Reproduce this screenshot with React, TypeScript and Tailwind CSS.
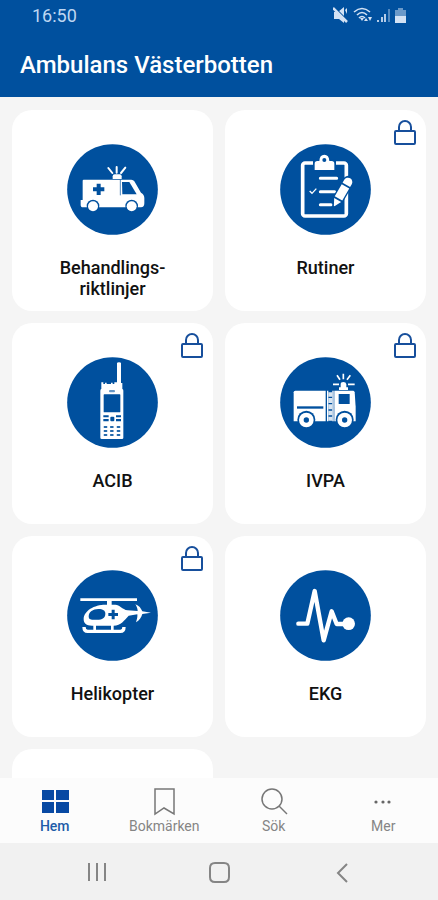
import type { ReactNode } from "react";

const BLUE = "#00509e";

function Disc({ children }: { children: ReactNode }) {
  return (
    <svg viewBox="0 0 273 273" className="size-[91px]" aria-hidden="true">
      <circle cx="136.5" cy="136.5" r="136" fill={BLUE} />
      {children}
    </svg>
  );
}

function AmbulanceIcon() {
  return (
    <Disc>
      <g fill="#fff">
        <path d="M50 107H193Q199 107 202 112L222 146Q232 151 232 162V178Q232 190 222 190H48Q41 190 41 182V168H47V110Q47 107 50 107Z" />
        <path d="M137 105V97Q137 91 143 91H158Q164 91 164 97V105Z" />
        <path d="M149 86V69M136 87L124 72M162 87L175 71" stroke="#fff" strokeWidth="6" strokeLinecap="round" />
      </g>
      <g fill={BLUE}>
        <path d="M89 119H101V130H112V142H101V153H89V142H78V130H89Z" />
        <path d="M165 114H187L209 151H166Z" />
        <circle cx="78" cy="186" r="19" />
        <circle cx="194" cy="186" r="19" />
      </g>
      <path d="M160 107V154" stroke={BLUE} strokeWidth="2" />
      <circle cx="78" cy="187" r="15" fill="#fff" />
      <circle cx="194" cy="187" r="15" fill="#fff" />
    </Disc>
  );
}

function ClipboardIcon() {
  return (
    <Disc>
      <rect x="68" y="57" width="131" height="159" rx="7" fill="none" stroke="#fff" strokeWidth="11" />
      <path d="M99 47H168V82H99Z" fill={BLUE} />
      <path d="M104 78V59Q104 51 112 51H118Q119 32 133 32T148 51H155Q163 51 163 59V78Z" fill="#fff" />
      <circle cx="133" cy="48" r="6" fill={BLUE} />
      <path d="M121 103H170M121 143H164M121 182H153" stroke="#fff" strokeWidth="9" strokeLinecap="round" />
      <path d="M89 141L96 148L109 134" fill="none" stroke="#fff" strokeWidth="4" />
      <g transform="translate(204 114) rotate(30)">
        <path d="M-17 -2A17 17 0 0 1 17 -2V58L2 88H-3L-17 58Z" fill={BLUE} />
        <path d="M-13 10V0A13 13 0 0 1 13 0V10ZM-13 15H13V57H-13ZM-12 62H12L1 83H-1Z" fill="#fff" />
      </g>
    </Disc>
  );
}

function RadioIcon() {
  const columns = [110, 129, 149];
  const rows = [207, 219, 231];
  return (
    <Disc>
      <path d="M150 19Q150 16 156 16T162 19V78H166V96Q169 97 169 101V242Q169 246 165 246H104Q100 246 100 242V101Q100 97 103 96V76H109V81H114V77H119V81H132V77H137V81H142V76H150Z" fill="#fff" />
      <g fill={BLUE}>
        <rect x="126" y="99" width="18" height="7" rx="3" opacity="0.6" />
        <rect x="110" y="112" width="50" height="54" rx="2" />
        <path d="M109 175H125V181H109ZM109 186H125V193H109ZM147 175H162V181H147ZM147 186H162V193H147Z" />
        <rect x="130" y="179" width="12" height="14" rx="3" />
        {rows.map((y) => columns.map((x) => <rect key={x + "-" + y} x={x} y={y} width="11" height="6" rx="2" opacity="0.85" />))}
      </g>
    </Disc>
  );
}

function FireTruckIcon() {
  return (
    <Disc>
      <g fill="#fff">
        <path d="M46 101H137V193H41V106Q41 101 46 101Z" />
        <path d="M141 101H145V193H141ZM157 101H161V193H157Z" />
        <path d="M145 106H157V119H145ZM145 123H157V138H145ZM145 142H157V157H145ZM145 161H157V175H145ZM145 179H157V191H145Z" opacity="0.85" />
        <path d="M163 101H220Q223 101 224 106L227 150V193H163Z" />
        <path d="M177 99V91H182V82Q182 75 190 75T199 82V91H204V99Z" />
      </g>
      <path d="M190 67V50M180 68L171 55M201 68L211 55M177 82H159M204 82H224" stroke="#fff" strokeWidth="5" />
      <g fill={BLUE}>
        <rect x="176" y="111" width="33" height="30" />
        <rect x="51" y="148" width="79" height="7" />
        <circle cx="79" cy="188" r="27" />
        <circle cx="194" cy="188" r="27" />
      </g>
      <g fill="none" stroke="#fff" strokeWidth="14">
        <circle cx="79" cy="189" r="15" />
        <circle cx="194" cy="189" r="15" />
      </g>
    </Disc>
  );
}

function HelicopterIcon() {
  return (
    <Disc>
      <path d="M40 85H210V93H134V105H120V93H40Z" fill="#fff" />
      <path d="M50 148C50 122 82 104 115 104H145C158 104 165 118 182 121L212 123C212 115 208 108 205 103C216 106 222 116 226 124L252 128L226 132C223 142 217 152 207 157C210 148 212 140 211 133L185 137C172 150 162 167 140 167H75C58 167 50 160 50 148Z" fill="#fff" />
      <path d="M65 139C65 126 78 117 94 117C108 117 115 122 115 131C115 143 106 149 90 149H75C67 149 65 145 65 139Z" fill={BLUE} />
      <path d="M134 119H143V129H153V138H143V148H134V138H124V129H134Z" fill={BLUE} />
      <path d="M51 171Q51 184 62 184H160Q171 184 171 171" fill="none" stroke="#fff" strokeWidth="10" />
      <path d="M83 165V180M136 165V180" stroke="#fff" strokeWidth="8" />
    </Disc>
  );
}

function PulseIcon() {
  return (
    <Disc>
      <path d="M55 161H82L104 63L131 211L155 124L170 162H205" fill="none" stroke="#fff" strokeWidth="13" strokeLinecap="round" strokeLinejoin="round" />
      <circle cx="206" cy="161" r="19" fill="#fff" />
    </Disc>
  );
}

function LockIcon() {
  return (
    <svg viewBox="0 0 22 25" className="absolute top-[10px] right-[10px] h-[25px] w-[22px]" fill="none" stroke="#174f9c" strokeWidth="2" aria-label="Låst">
      <rect x="1" y="11" width="20" height="13" rx="1" />
      <path d="M5 11V7A6 6 0 0 1 17 7V11" />
    </svg>
  );
}

const cards: { label: string; icon?: ReactNode; locked?: boolean }[] = [
  { label: "Behandlings-\nriktlinjer", icon: <AmbulanceIcon /> },
  { label: "Rutiner", icon: <ClipboardIcon />, locked: true },
  { label: "ACIB", icon: <RadioIcon />, locked: true },
  { label: "IVPA", icon: <FireTruckIcon />, locked: true },
  { label: "Helikopter", icon: <HelicopterIcon />, locked: true },
  { label: "EKG", icon: <PulseIcon /> },
  { label: "" },
];

function StatusIcons() {
  return (
    <svg viewBox="0 0 75 18" className="h-[18px] w-[75px]" fill="#d3e2f4" aria-hidden="true">
      <path d="M1 5H5L11 0V16L6 12H1Z" />
      <path d="M1 0L15 14" stroke={BLUE} strokeWidth="1.5" />
      <path d="M0 1L14 15" stroke="#d3e2f4" strokeWidth="2.5" />
      <path d="M12 3L14 1V7Z" />
      <path d="M21 5Q29 -2 37 5M24 8Q29 3 34 8M26 11Q29 8 32 11" fill="none" stroke="#d3e2f4" strokeWidth="1.6" />
      <path d="M27 11H31L29 14ZM33 11L35 14H31ZM37 14L35 10H39Z" />
      <path d="M44 13H46V15H44ZM48 10H50V15H48ZM51 7H53V15H51Z" opacity="0.85" />
      <path d="M55 2H57V15H55Z" opacity="0.4" />
      <path d="M62 3H65V1H70V3H73V9H62Z" opacity="0.5" />
      <path d="M62 9H73V16H62Z" />
    </svg>
  );
}

const tabs: { label: string; active?: boolean; icon: ReactNode }[] = [
  {
    label: "Hem",
    active: true,
    icon: <path d="M1 2H13V12H1ZM15 2H28V12H15ZM1 14H13V25H1ZM15 14H28V25H15Z" fill="#0849a3" stroke="none" />,
  },
  { label: "Bokmärken", icon: <path d="M5 1H24V26L14 20L5 26Z" /> },
  {
    label: "Sök",
    icon: (
      <>
        <circle cx="12" cy="11" r="10" />
        <path d="M19 18L27 26" />
      </>
    ),
  },
  {
    label: "Mer",
    icon: (
      <g fill="#666" stroke="none">
        <circle cx="7" cy="14" r="1.6" />
        <circle cx="14" cy="14" r="1.6" />
        <circle cx="20" cy="14" r="1.6" />
      </g>
    ),
  },
];

const systemButtons = [
  { label: "Senaste appar", path: "M3 2V20M11 2V20M19 2V20" },
  { label: "Hem", path: "M7 2H16Q21 2 21 7V16Q21 21 16 21H7Q2 21 2 16V7Q2 2 7 2Z" },
  { label: "Tillbaka", path: "M17 3L8 12L17 21" },
];

export default function App() {
  return (
    <div className="flex h-dvh flex-col bg-[#f5f5f5] font-['Roboto',sans-serif]">
      <header className="shrink-0 bg-[#00509e]">
        <div className="flex h-8 items-center justify-between pr-[30px] pl-8 text-lg text-[#bdd6f2]">
          <span>16:50</span>
          <StatusIcons />
        </div>
        <h1 className="flex h-[65px] items-center px-5 text-2xl font-medium text-white">Ambulans Västerbotten</h1>
      </header>

      <main className="grid min-h-0 flex-1 auto-rows-max grid-cols-2 gap-3 overflow-y-auto px-3 py-[13px] [scrollbar-width:none]">
        {cards.map((card, i) => (
          <button key={i} type="button" aria-label={card.label || "Fler"} className="relative flex aspect-square flex-col items-center gap-[22px] rounded-[20px] bg-white pt-[34px]">
            {card.icon}
            {card.label && <span className="text-lg leading-[21px] font-medium whitespace-pre-line text-[#111]">{card.label}</span>}
            {card.locked && <LockIcon />}
          </button>
        ))}
      </main>

      <nav className="grid h-[65px] shrink-0 grid-cols-4 bg-[#fcfcfc]">
        {tabs.map((tab) => (
          <a key={tab.label} href="#" className={tab.active ? "flex flex-col items-center pt-[10px] text-sm font-medium text-[#1f5ca8]" : "flex flex-col items-center pt-[10px] text-sm text-[#858585]"}>
            <svg viewBox="0 0 28 28" className="size-7" fill="none" stroke="#777" strokeWidth="1.5" aria-hidden="true">
              {tab.icon}
            </svg>
            <span>{tab.label}</span>
          </a>
        ))}
      </nav>

      <div className="grid h-[57px] shrink-0 grid-cols-3 bg-[#f1f1f1] px-9">
        {systemButtons.map((b) => (
          <button key={b.label} type="button" aria-label={b.label} className="flex items-center justify-center">
            <svg viewBox="0 0 22 22" className="size-[22px]" fill="none" stroke="#858585" strokeWidth="2">
              <path d={b.path} />
            </svg>
          </button>
        ))}
      </div>
    </div>
  );
}
